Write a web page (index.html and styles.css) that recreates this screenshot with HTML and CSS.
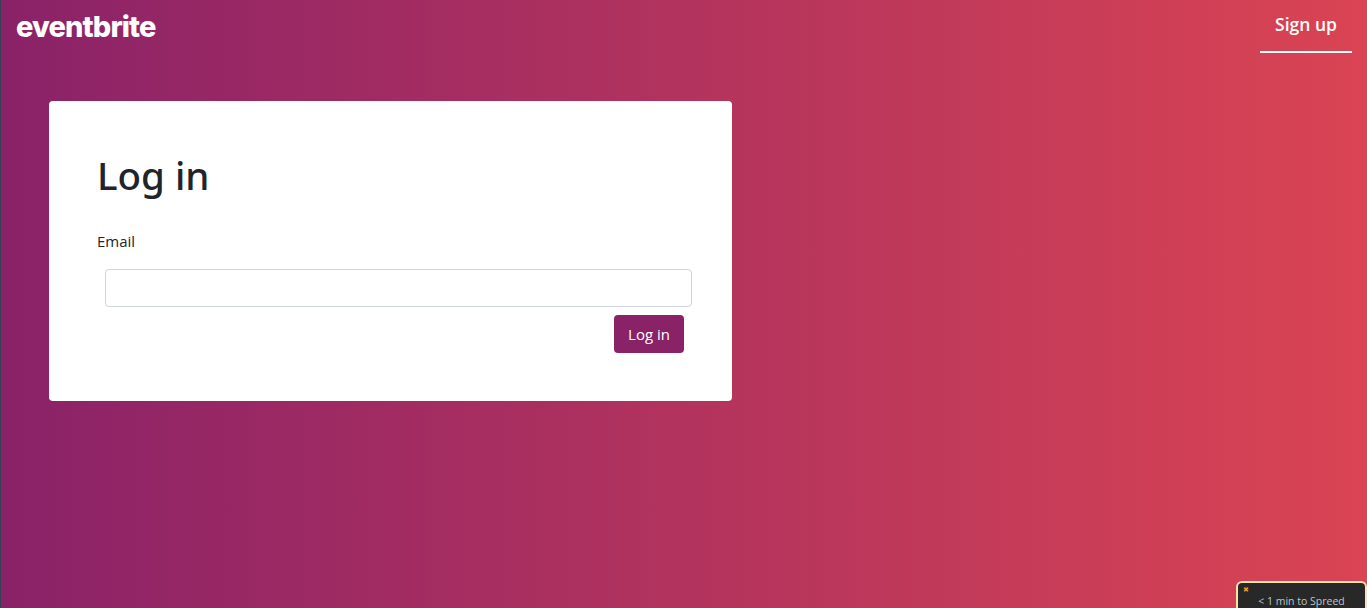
FILE: index.html
```html
<!DOCTYPE html>
<html lang="en">
<head>
    <title>Log in</title>
    <link rel="stylesheet" href="styles.css">
</head>
<body>
    <nav class="navbar">
        <a class="logo" href="#">eventbrite</a>
        <a class="signup" href="#">Sign up</a>
    </nav>
    <main class="card">
        <h1>Log in</h1>
        <form class="login-form">
            <label for="email">Email</label>
            <input id="email" type="email">
            <div class="actions">
                <button type="button">Log in</button>
            </div>
        </form>
    </main>
    <div class="spreed-widget">
        <span class="close">&#10006;</span>
        <span class="time">&lt; 1 min to Spreed</span>
    </div>
</body>
</html>
```

FILE: styles.css
```css
* {
    box-sizing: border-box;
}
html, body {
    height: 100%;
}
body {
    margin: 0;
    overflow: hidden;
    border-left: 1px solid #3b3f55;
    background: linear-gradient(to right, #8a2268, #da4453);
    font-family: "Open Sans", "Noto Sans", sans-serif;
    color: #212529;
}
a {
    text-decoration: none;
}
.navbar {
    display: flex;
    justify-content: space-between;
    align-items: flex-start;
    height: 53px;
    padding: 0 15px;
}
.logo {
    margin-top: 9px;
    color: white;
    font-family: "Inter", sans-serif;
    font-size: 29px;
    font-weight: 800;
    line-height: 36px;
    letter-spacing: -0.9px;
}
.signup {
    width: 92px;
    height: 53px;
    padding-top: 11px;
    border-bottom: 2px solid white;
    color: white;
    font-size: 17.5px;
    font-weight: 600;
    line-height: 26px;
    text-align: center;
}
.card {
    width: 683px;
    height: 300px;
    margin: 48px 0 0 48px;
    padding: 47px 48px 0 48px;
    border-radius: 4px;
    background-color: white;
}
h1 {
    margin: 0 0 27px;
    font-family: "Noto Sans", sans-serif;
    font-size: 38.5px;
    font-weight: 500;
    line-height: 54px;
}
label {
    display: block;
    margin-bottom: 16px;
    font-size: 15px;
    line-height: 24px;
}
input {
    display: block;
    width: 587px;
    height: 38px;
    margin-left: 8px;
    border: 1px solid #ced4da;
    border-radius: 4px;
}
.actions {
    display: flex;
    justify-content: flex-end;
    margin-top: 8px;
}
button {
    width: 70px;
    height: 38px;
    border: none;
    border-radius: 4px;
    background-color: #8a2268;
    color: white;
    font-family: inherit;
    font-size: 15px;
}
.spreed-widget {
    position: absolute;
    right: 0;
    bottom: 0;
    width: 131px;
    height: 27px;
    padding: 3px 5px;
    border: 2px solid #fde5a8;
    border-bottom: none;
    border-radius: 6px 6px 0 0;
    background-color: #282828;
    color: #b9c6c9;
    font-size: 10.5px;
}
.close {
    display: block;
    color: #f09d1e;
    font-size: 7px;
    line-height: 8px;
}
.time {
    display: block;
    line-height: 14px;
    text-align: center;
    white-space: nowrap;
}
```
